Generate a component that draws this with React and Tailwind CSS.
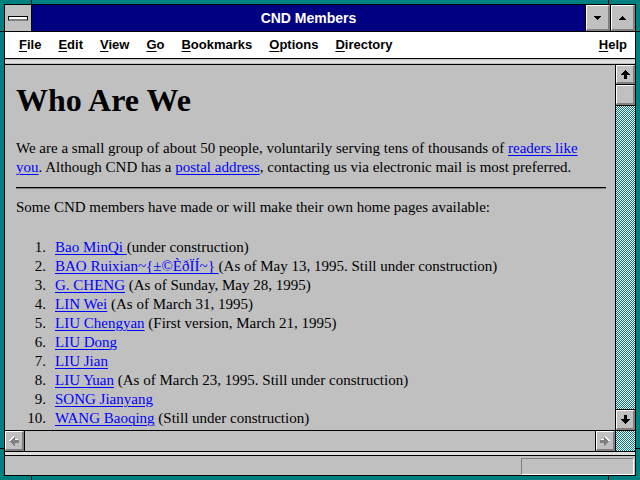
import React from "react";

const ARROW = "M4 0h1v1h1v1h1v1h1v1h1v1H6v4H3V5H0V4h1V3h1V2h1V1h1z";

function ArrowUp({ className = "" }) {
  return (
    <svg width="9" height="9" viewBox="0 0 9 9" shapeRendering="crispEdges" className={className}>
      <path d={ARROW} fill="#000" />
    </svg>
  );
}

function ArrowSide({ dir }) {
  const rot = dir === "left" ? "-rotate-90" : "rotate-90";
  return (
    <svg width="10" height="10" viewBox="0 0 10 10" shapeRendering="crispEdges" className={rot}>
      <path d={ARROW} fill="#ffffff" transform={dir === "left" ? "translate(1 0)" : "translate(0 0)"} />
      <path d={ARROW} fill="#808080" transform={dir === "left" ? "translate(0 1)" : "translate(1 1)"} />
    </svg>
  );
}

function Tri({ up }) {
  return (
    <svg width="7" height="4" viewBox="0 0 7 4" shapeRendering="crispEdges" className={up ? "rotate-180" : ""}>
      <path d="M0 0h7v1H6v1H5v1H4v1H3V3H2V2H1V1H0z" fill="#000" />
    </svg>
  );
}

function Bevel({ children }) {
  return (
    <div className="w-full h-full flex items-center justify-center bg-[#c0c0c0] border-t border-l border-t-white border-l-white border-b-2 border-r-2 border-b-[#808080] border-r-[#808080]">
      {children}
    </div>
  );
}

function MenuItem({ k, rest }) {
  return (
    <span>
      <span className="underline underline-offset-[2px] decoration-1">{k}</span>
      {rest}
    </span>
  );
}

const items = [
  ["Bao MinQi ", "(under construction)"],
  ["BAO Ruixian~{±©ÈðÏÍ~} ", "(As of May 13, 1995. Still under construction)"],
  ["G. CHENG", " (As of Sunday, May 28, 1995)"],
  ["LIN Wei", " (As of March 31, 1995)"],
  ["LIU Chengyan", " (First version, March 21, 1995)"],
  ["LIU Dong", ""],
  ["LIU Jian", ""],
  ["LIU Yuan", " (As of March 23, 1995. Still under construction)"],
  ["SONG Jianyang", ""],
  ["WANG Baoqing", " (Still under construction)"],
];

const dither =
  "bg-[conic-gradient(#008080_25%,#ffffff_0_50%,#008080_0_75%,#ffffff_0)] bg-[length:2px_2px]";

export default function App() {
  return (
    <div className="relative w-[640px] h-[480px] bg-[#008080] p-[4px] overflow-hidden">
      {/* frame notches */}
      <div className="absolute left-[31px] top-0 w-px h-[4px] bg-black" />
      <div className="absolute left-[608px] top-0 w-px h-[4px] bg-black" />
      <div className="absolute left-[31px] bottom-0 w-px h-[4px] bg-black" />
      <div className="absolute left-[608px] bottom-0 w-px h-[4px] bg-black" />
      <div className="absolute left-0 top-[31px] w-[4px] h-px bg-black" />
      <div className="absolute right-0 top-[31px] w-[4px] h-px bg-black" />
      <div className="absolute left-0 top-[448px] w-[4px] h-px bg-black" />
      <div className="absolute right-0 top-[448px] w-[4px] h-px bg-black" />

      <div className="w-full h-full border border-black flex flex-col bg-[#c0c0c0]">
        {/* Title bar */}
        <div className="h-[27px] shrink-0 flex border-b border-black">
          <div className="w-[27px] border-r border-black bg-[#c0c0c0] flex items-center justify-center">
            <div className="w-[20px] h-[5px] bg-white border border-black border-b-2 border-b-[#808080] mt-[1px]" />
          </div>
          <div className="flex-1 bg-[#000080] flex items-center justify-center text-white font-bold text-[14px] font-['Liberation_Sans',Arial,sans-serif]">
            CND Members
          </div>
          <div className="w-[25px] border-l border-black">
            <Bevel>
              <Tri />
            </Bevel>
          </div>
          <div className="w-[25px] border-l border-black">
            <Bevel>
              <Tri up />
            </Bevel>
          </div>
        </div>

        {/* Menu bar */}
        <div className="h-[27px] shrink-0 bg-white border-b border-black flex items-center pl-[14px] pr-[8px] text-[13px] font-bold text-black font-['Liberation_Sans',Arial,sans-serif]">
          <div className="flex gap-[17px]">
            <MenuItem k="F" rest="ile" />
            <MenuItem k="E" rest="dit" />
            <MenuItem k="V" rest="iew" />
            <MenuItem k="G" rest="o" />
            <MenuItem k="B" rest="ookmarks" />
            <MenuItem k="O" rest="ptions" />
            <MenuItem k="D" rest="irectory" />
          </div>
          <div className="ml-auto">
            <MenuItem k="H" rest="elp" />
          </div>
        </div>

        {/* thin strip */}
        <div className="h-[6px] shrink-0 border-b border-black flex flex-col">
          <div className="h-[1px] bg-[#c0c0c0]" />
          <div className="h-[3px] bg-[#e0e0e0]" />
          <div className="h-[1px] bg-[#c0c0c0]" />
        </div>

        {/* Main area */}
        <div className="h-[386px] shrink-0 flex">
          <div className="flex-1 flex flex-col min-w-0">
            <div className="h-[365px] overflow-hidden pl-[11px] pr-[9px] text-black font-['Liberation_Serif','Times_New_Roman',serif]">
              <h1 className="mt-[19px] text-[32px] leading-[32px] font-bold">Who Are We</h1>
              <p className="mt-[23px] text-[15px] leading-[19px]">
                We are a small group of about 50 people, voluntarily serving tens of thousands of{" "}
                <a className="text-[#0000ff] underline decoration-1 underline-offset-[2px]">
                  readers like
                  <br />
                  you
                </a>
                . Although CND has a{" "}
                <a className="text-[#0000ff] underline decoration-1 underline-offset-[2px]">postal address</a>,
                contacting us via electronic mail is most preferred.
              </p>
              <div className="mt-[10px] h-[2px] border-t border-black border-b border-b-[#808080]" />
              <p className="mt-[9px] text-[15px] leading-[19px]">
                Some CND members have made or will make their own home pages available:
              </p>
              <ol className="mt-[21px] text-[15px] leading-[19px]">
                {items.map(([name, note], i) => (
                  <li key={i} className="flex h-[19px] whitespace-pre">
                    <span className="w-[30px] text-right">{i + 1}.</span>
                    <span className="ml-[9px]">
                      <a className="text-[#0000ff] underline decoration-1 underline-offset-[2px]">{name}</a>
                      {note}
                    </span>
                  </li>
                ))}
              </ol>
            </div>
            {/* horizontal scrollbar */}
            <div className="h-[21px] border-t border-black flex">
              <div className="w-[20px] border-r border-black">
                <Bevel>
                  <ArrowSide dir="left" />
                </Bevel>
              </div>
              <div className="flex-1 bg-[#c0c0c0]" />
              <div className="w-[20px] border-l border-black">
                <Bevel>
                  <ArrowSide dir="right" />
                </Bevel>
              </div>
            </div>
          </div>

          {/* vertical scrollbar */}
          <div className="w-[20px] border-l border-black flex flex-col">
            <div className="h-[20px] border-b border-black">
              <Bevel>
                <ArrowUp />
              </Bevel>
            </div>
            <div className="h-[21px] border-b border-black">
              <Bevel />
            </div>
            <div className={`flex-1 ${dither}`} />
            <div className="h-[22px] border-y border-black">
              <Bevel>
                <ArrowUp className="rotate-180" />
              </Bevel>
            </div>
            <div className={`h-[20px] ${dither}`} />
          </div>
        </div>

        {/* bottom strip */}
        <div className="h-[5px] shrink-0 border-y border-black bg-[#e0e0e0]" />

        {/* status bar */}
        <div className="h-[19px] shrink-0 flex justify-end pt-[2px] pr-[1px] bg-[#c0c0c0]">
          <div className="w-[113px] h-[17px] border-t border-l border-t-[#808080] border-l-[#808080] border-b border-r border-b-white border-r-white" />
        </div>
      </div>
    </div>
  );
}
